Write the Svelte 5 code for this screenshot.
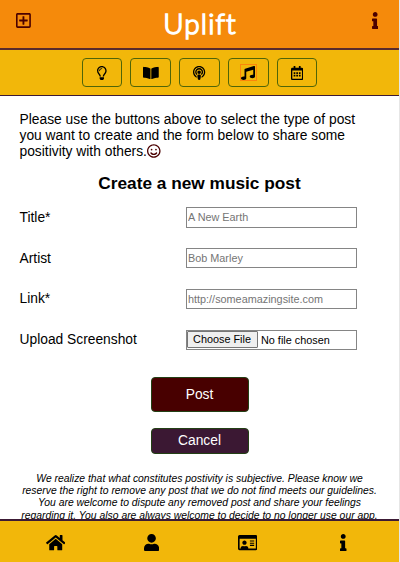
<script>
  const icons = {
    plus: [448, 'M352 240v32c0 6.6-5.4 12-12 12h-88v88c0 6.6-5.4 12-12 12h-32c-6.6 0-12-5.4-12-12v-88h-88c-6.6 0-12-5.4-12-12v-32c0-6.6 5.4-12 12-12h88v-88c0-6.6 5.4-12 12-12h32c6.6 0 12 5.4 12 12v88h88c6.6 0 12 5.4 12 12zm96-160v352c0 26.5-21.5 48-48 48H48c-26.5 0-48-21.5-48-48V80c0-26.5 21.5-48 48-48h352c26.5 0 48 21.5 48 48zm-48 346V86c0-3.3-2.7-6-6-6H54c-3.3 0-6 2.7-6 6v340c0 3.3 2.7 6 6 6h340c3.3 0 6-2.7 6-6z'],
    info: [192, 'M20 424.229h20V279.771H20c-11.046 0-20-8.954-20-20V212c0-11.046 8.954-20 20-20h112c11.046 0 20 8.954 20 20v212.229h20c11.046 0 20 8.954 20 20V492c0 11.046-8.954 20-20 20H20c-11.046 0-20-8.954-20-20v-47.771c0-11.046 8.954-20 20-20zM96 0C56.235 0 24 32.235 24 72s32.235 72 72 72 72-32.235 72-72S135.764 0 96 0z'],
    bulb: [352, 'M176 80c-52.94 0-96 43.06-96 96 0 8.84 7.16 16 16 16s16-7.16 16-16c0-35.3 28.72-64 64-64 8.84 0 16-7.16 16-16s-7.16-16-16-16zM96.06 459.17c0 3.15.93 6.22 2.68 8.84l24.51 36.84c2.97 4.46 7.97 7.14 13.32 7.14h78.85c5.36 0 10.36-2.68 13.32-7.14l24.51-36.84c1.74-2.62 2.67-5.7 2.68-8.84l.05-43.18H96.02l.04 43.18zM176 0C73.72 0 0 82.97 0 176c0 44.37 16.45 84.85 43.56 115.78 16.64 18.99 42.74 58.8 52.42 92.16v.06h48v-.12c-.01-4.77-.72-9.51-2.15-14.07-5.59-17.81-22.82-64.77-62.17-109.67-20.54-23.43-31.52-53.15-31.61-84.14-.2-73.64 59.67-128 127.95-128 70.58 0 128 57.42 128 128 0 30.97-11.24 60.85-31.65 84.14-39.11 44.61-56.42 91.47-62.1 109.46a47.507 47.507 0 0 0-2.22 14.3v.1h48v-.05c9.68-33.37 35.78-73.18 52.42-92.16C335.55 260.85 352 220.37 352 176 352 78.8 273.2 0 176 0z'],
    book: [576, 'M542.22 32.05c-54.8 3.11-163.72 14.43-230.96 55.59-4.64 2.84-7.27 7.89-7.27 13.17v363.87c0 11.55 12.63 18.85 23.28 13.49 69.18-34.82 169.23-44.32 218.7-46.92 16.89-.89 30.02-14.43 30.02-30.66V62.75c.01-17.71-15.35-31.74-33.77-30.7zM264.73 87.64C197.5 46.48 88.58 35.17 33.78 32.05 15.36 31.01 0 45.04 0 62.75V400.6c0 16.24 13.13 29.78 30.02 30.66 49.49 2.6 149.59 12.11 218.77 46.95 10.62 5.35 23.21-1.94 23.21-13.46V100.63c0-5.29-2.62-10.14-7.27-12.99z'],
    podcast: [448, 'M267.429 488.563C262.286 507.573 242.858 512 224 512c-18.857 0-38.286-4.427-43.428-23.437C172.927 460.134 160 388.898 160 355.75c0-35.156 31.142-43.75 64-43.75s64 8.594 64 43.75c0 32.949-12.871 104.179-20.571 132.813zM156.867 288.554c-18.693-18.308-29.958-44.173-28.784-72.599 2.054-49.724 42.395-89.956 92.124-91.881C274.862 121.958 320 165.807 320 220c0 26.827-11.064 51.116-28.866 68.552-2.675 2.62-2.401 6.986.628 9.187 9.312 6.765 16.461 15.343 21.234 25.363 1.741 3.654 6.497 4.66 9.449 1.891 28.826-27.043 46.553-65.783 45.511-108.565-1.855-76.206-63.595-138.208-139.793-140.369C146.869 73.753 80 139.215 80 220c0 41.361 17.532 78.7 45.55 104.989 2.953 2.771 7.711 1.77 9.453-1.887 4.774-10.021 11.923-18.598 21.235-25.363 3.029-2.2 3.304-6.566.629-9.185zM224 0C100.204 0 0 100.185 0 224c0 89.992 52.602 165.647 125.739 201.408 4.333 2.118 9.267-1.544 8.535-6.31-2.382-15.512-4.342-30.946-5.406-44.339-.146-1.836-1.149-3.486-2.678-4.512-47.4-31.806-78.564-86.016-78.187-147.347.592-96.237 79.29-174.648 175.529-174.899C320.793 47.747 400 126.797 400 224c0 61.932-32.158 116.49-80.65 147.867-.999 14.037-3.069 30.588-5.624 47.23-.732 4.767 4.203 8.429 8.535 6.31C395.227 389.727 448 314.187 448 224 448 100.205 347.815 0 224 0zm0 160c-35.346 0-64 28.654-64 64s28.654 64 64 64 64-28.654 64-64-28.654-64-64-64z'],
    music: [512, 'M470.38 1.51L150.41 96A32 32 0 0 0 128 126.51v261.41A139 139 0 0 0 96 384c-53 0-96 28.66-96 64s43 64 96 64 96-28.66 96-64V214.32l256-75v184.61a138.4 138.4 0 0 0-32-3.93c-53 0-96 28.66-96 64s43 64 96 64 96-28.65 96-64V32a32 32 0 0 0-41.62-30.49z'],
    calendar: [448, 'M148 288h-40c-6.6 0-12-5.4-12-12v-40c0-6.6 5.4-12 12-12h40c6.6 0 12 5.4 12 12v40c0 6.6-5.4 12-12 12zm108-12v-40c0-6.6-5.4-12-12-12h-40c-6.6 0-12 5.4-12 12v40c0 6.6 5.4 12 12 12h40c6.6 0 12-5.4 12-12zm96 0v-40c0-6.6-5.4-12-12-12h-40c-6.6 0-12 5.4-12 12v40c0 6.6 5.4 12 12 12h40c6.6 0 12-5.4 12-12zm-96 96v-40c0-6.6-5.4-12-12-12h-40c-6.6 0-12 5.4-12 12v40c0 6.6 5.4 12 12 12h40c6.6 0 12-5.4 12-12zm-96 0v-40c0-6.6-5.4-12-12-12h-40c-6.6 0-12 5.4-12 12v40c0 6.6 5.4 12 12 12h40c6.6 0 12-5.4 12-12zm192 0v-40c0-6.6-5.4-12-12-12h-40c-6.6 0-12 5.4-12 12v40c0 6.6 5.4 12 12 12h40c6.6 0 12-5.4 12-12zm96-260v352c0 26.5-21.5 48-48 48H48c-26.5 0-48-21.5-48-48V112c0-26.5 21.5-48 48-48h48V12c0-6.6 5.4-12 12-12h40c6.6 0 12 5.4 12 12v52h128V12c0-6.6 5.4-12 12-12h40c6.6 0 12 5.4 12 12v52h48c26.5 0 48 21.5 48 48zm-48 346V160H48v298c0 3.3 2.7 6 6 6h340c3.3 0 6-2.7 6-6z'],
    smile: [496, 'M248 8C111 8 0 119 0 256s111 248 248 248 248-111 248-248S385 8 248 8zm0 448c-110.3 0-200-89.7-200-200S137.7 56 248 56s200 89.7 200 200-89.7 200-200 200zm-80-216c17.7 0 32-14.3 32-32s-14.3-32-32-32-32 14.3-32 32 14.3 32 32 32zm160 0c17.7 0 32-14.3 32-32s-14.3-32-32-32-32 14.3-32 32 14.3 32 32 32zm4 72.6c-20.8 25-51.5 39.4-84 39.4s-63.2-14.3-84-39.4c-8.5-10.2-23.7-11.5-33.8-3.1-10.2 8.5-11.5 23.6-3.1 33.8 30 36 74.1 56.6 120.9 56.6s90.9-20.6 120.9-56.6c8.5-10.2 7.1-25.3-3.1-33.8-10.1-8.4-25.3-7.1-33.8 3.1z'],
    home: [576, 'M280.37 148.26L96 300.11V464a16 16 0 0 0 16 16l112.06-.29a16 16 0 0 0 15.92-16V368a16 16 0 0 1 16-16h64a16 16 0 0 1 16 16v95.64a16 16 0 0 0 16 16.05L464 480a16 16 0 0 0 16-16V300L295.67 148.26a12.19 12.19 0 0 0-15.3 0zM571.6 251.47L488 182.56V44.05a12 12 0 0 0-12-12h-56a12 12 0 0 0-12 12v72.61L318.47 43a48 48 0 0 0-61 0L4.34 251.47a12 12 0 0 0-1.6 16.9l25.5 31A12 12 0 0 0 45.15 301l235.22-193.74a12.19 12.19 0 0 1 15.3 0L530.9 301a12 12 0 0 0 16.9-1.6l25.5-31a12 12 0 0 0-1.7-16.93z'],
    user: [448, 'M224 256c70.7 0 128-57.3 128-128S294.7 0 224 0 96 57.3 96 128s57.3 128 128 128zm89.6 32h-16.7c-22.2 10.2-46.9 16-72.9 16s-50.6-5.8-72.9-16h-16.7C60.2 288 0 348.2 0 422.4V464c0 26.5 21.5 48 48 48h352c26.5 0 48-21.5 48-48v-41.6c0-74.2-60.2-134.4-134.4-134.4z'],
    card: [576, 'M528 32H48C21.5 32 0 53.5 0 80v352c0 26.5 21.5 48 48 48h480c26.5 0 48-21.5 48-48V80c0-26.5-21.5-48-48-48zm0 400H303.2c.9-4.5.8 3.6.8-22.4 0-31.8-30.1-57.6-67.2-57.6-10.8 0-18.7 8-44.8 8-26.9 0-33.4-8-44.8-8-37.1 0-67.2 25.8-67.2 57.6 0 26-.2 17.9.8 22.4H48V144h480v288zm-168-80h112c4.4 0 8-3.6 8-8v-16c0-4.4-3.6-8-8-8H360c-4.4 0-8 3.6-8 8v16c0 4.4 3.6 8 8 8zm0-64h112c4.4 0 8-3.6 8-8v-16c0-4.4-3.6-8-8-8H360c-4.4 0-8 3.6-8 8v16c0 4.4 3.6 8 8 8zm0-64h112c4.4 0 8-3.6 8-8v-16c0-4.4-3.6-8-8-8H360c-4.4 0-8 3.6-8 8v16c0 4.4 3.6 8 8 8zm-168 96c35.3 0 64-28.7 64-64s-28.7-64-64-64-64 28.7-64 64 28.7 64 64 64z']
  };
  const types = ['bulb', 'book', 'podcast', 'music', 'calendar'];
  const tabs = ['home', 'user', 'card', 'info'];
  const fields = [
    ['Title*', 'A New Earth'],
    ['Artist', 'Bob Marley'],
    ['Link*', 'http://someamazingsite.com']
  ];
</script>

{#snippet icon(name)}
  <svg class="icon {name}" viewBox="0 0 {icons[name][0]} 512"><path d={icons[name][1]} /></svg>
{/snippet}

<div class="app">
  <header>
    {@render icon('plus')}
    <h1>Uplift</h1>
    {@render icon('info')}
  </header>
  <nav class="types">
    {#each types as t}
      <button class:active={t === 'music'} aria-label={t}><span>{@render icon(t)}</span></button>
    {/each}
  </nav>
  <main>
    <p class="intro">Please use the buttons above to select the type of post<br />you want to create and the form below to share some<br />positivity with others.{@render icon('smile')}</p>
    <h2>Create a new music post</h2>
    <form>
      {#each fields as [label, hint]}
        <label><span>{label}</span><input type="text" placeholder={hint} /></label>
      {/each}
      <label><span>Upload Screenshot</span><input type="file" /></label>
      <button type="button" class="post">Post</button>
      <button type="button" class="cancel">Cancel</button>
    </form>
    <p class="note">We realize that what constitutes postivity is subjective. Please know we<br />reserve the right to remove any post that we do not find meets our guidelines.<br />You are welcome to dispute any removed post and share your feelings<br />regarding it. You also are always welcome to decide to no longer use our app.</p>
  </main>
  <footer>
    {#each tabs as t}
      <div class="tab">{@render icon(t)}</div>
    {/each}
  </footer>
</div>

<style>
  :global(body) { margin: 0; background: #fff; }
  .app {
    box-sizing: border-box;
    width: 400px;
    height: 562px;
    border-right: 1px solid #e6e6e6;
    display: flex;
    flex-direction: column;
    overflow: hidden;
    font-family: "Liberation Sans", Arial, sans-serif;
    font-size: 13.8px;
    color: #000;
  }
  .icon { display: block; height: 14px; fill: currentColor; }
  header {
    box-sizing: border-box;
    height: 50px;
    flex: none;
    display: flex;
    justify-content: space-between;
    padding: 0 20.8px 0 16.3px;
    background: #f58a0b;
    border-bottom: 2px solid #5a2a2c;
    color: #4b0000;
  }
  header .icon { height: 17px; margin-top: 11.7px; }
  h1 {
    margin: 2.5px 3px 0 0;
    font: 300 28px/40px "Lato", sans-serif;
    letter-spacing: 1.1px;
    color: #fff;
    -webkit-text-stroke: 1.5px #fff;
    stroke-linejoin: round;
  }
  .types {
    box-sizing: border-box;
    height: 46px;
    flex: none;
    display: flex;
    justify-content: center;
    gap: 8px;
    padding-top: 8px;
    background: #f2b70a;
    border-bottom: 1.5px solid #3c1a35;
  }
  .types button {
    box-sizing: border-box;
    width: 40.8px;
    height: 29px;
    padding: 0;
    display: flex;
    align-items: center;
    justify-content: center;
    background: none;
    border: 1px solid #4f6508;
    border-radius: 4px;
    color: #000;
  }
  .active span { padding: 0.5px; border: 1px solid #fb850b; }
  main { flex: 1; min-height: 0; overflow: hidden; }
  .intro { margin: 14.5px 0 0 19.5px; line-height: 16.2px; font-size: 13.82px; white-space: nowrap; }
  .smile { display: inline-block; height: 14px; vertical-align: -2px; color: #4b0000; }
  h2 { margin: 13px 0 0; text-align: center; font-size: 17.25px; line-height: 22px; }
  form { display: flex; flex-direction: column; align-items: center; padding-top: 13px; }
  label {
    box-sizing: border-box;
    width: 399px;
    height: 20.5px;
    margin-bottom: 20.3px;
    padding: 0 42px 0 19.5px;
    display: flex;
    align-items: center;
    justify-content: space-between;
  }
  input {
    box-sizing: border-box;
    width: 171.5px;
    height: 20.5px;
    padding: 0 1.5px;
    border: 1px solid #858585;
    border-radius: 0;
    background: #fff;
    font: 10.85px "Liberation Sans", Arial, sans-serif;
    color: #000;
  }
  input::placeholder { color: #757575; opacity: 1; }
  input[type='file'] { padding: 0; line-height: 16px; }
  input::file-selector-button {
    box-sizing: border-box;
    height: 17px;
    width: 71px;
    margin: 0 3.5px 0 0;
    padding: 0;
    border: 1px solid #767676;
    border-radius: 1px;
    background: #efefef;
    font: inherit;
    line-height: 14px;
    color: #000;
  }
  .post, .cancel {
    box-sizing: border-box;
    width: 98px;
    height: 34.5px;
    margin-top: 7px;
    padding: 0;
    border: 1px solid #234015;
    border-radius: 4px;
    background: #480000;
    color: #fff;
    font: 13.8px "Liberation Sans", Arial, sans-serif;
  }
  .cancel { height: 26px; margin-top: 16px; background: #3b1833; }
  .note {
    margin: 19px 0 0;
    text-align: center;
    font-size: 10.36px;
    font-style: italic;
    line-height: 12.3px;
    white-space: nowrap;
  }
  footer {
    box-sizing: border-box;
    height: 43px;
    flex: none;
    display: flex;
    padding-left: 7.5px;
    background: #f2b70a;
    border-top: 2px solid #3c1a35;
  }
  .tab { width: 96px; display: flex; justify-content: center; padding-top: 13px; }
  .tab .icon { height: 17.3px; }
</style>
